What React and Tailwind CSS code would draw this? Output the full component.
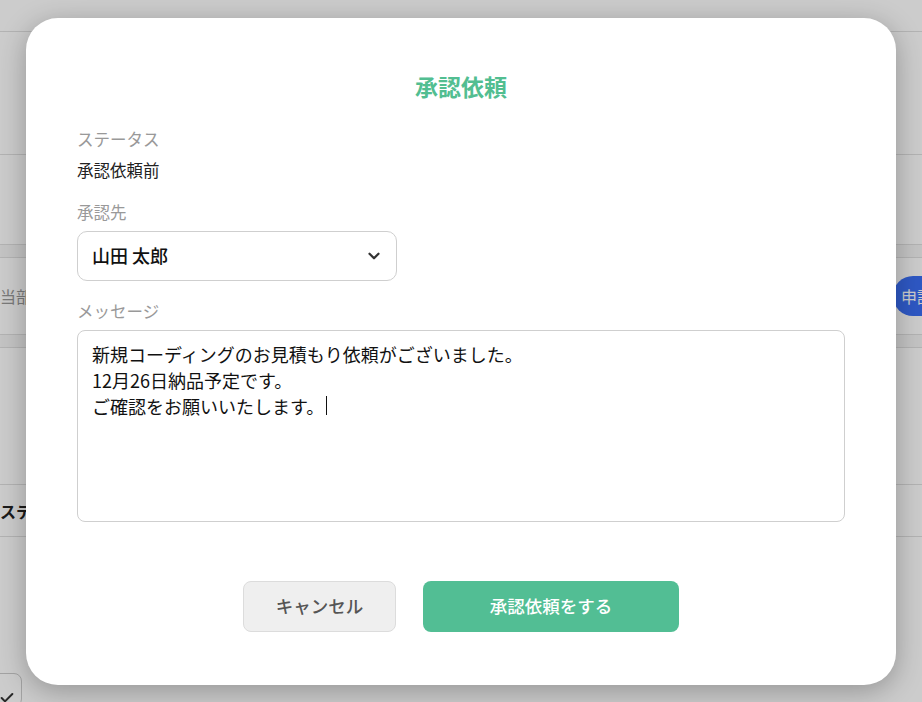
import { ChevronDown, Check } from "lucide-react";

function BackgroundPage() {
  return (
    <div className="flex flex-col bg-white text-[16px] text-[#555]">
      <div className="h-[32px] border-b border-[#e0e0e0]" />
      <div className="h-[123px] border-b border-[#e0e0e0]" />
      <div className="h-[90px] border-b border-[#e0e0e0]" />
      <div className="h-[13px] border-b border-[#e0e0e0] bg-[#f6f6f6]" />
      <div className="h-[77px] border-b border-[#e0e0e0] flex items-center justify-between">
        <span className="text-[#999]">当部署</span>
        <span className="shrink-0 mr-[-51px] w-[80px] h-[40px] pl-2 flex items-center rounded-l-full bg-[#3a6ff5] text-white">
          申請
        </span>
      </div>
      <div className="h-[13px] border-b border-[#e0e0e0] bg-[#f6f6f6]" />
      <div className="h-[137px] border-b border-[#e0e0e0]" />
      <div className="h-[52px] border-b border-[#e0e0e0] flex items-center">
        <span className="font-semibold text-[#222]">ステータス</span>
      </div>
      <div className="h-[136px]" />
      <div className="-ml-3 w-[34px] h-[34px] rounded-lg border border-[#ccc] flex items-end justify-end pr-1.5">
        <Check size={16} strokeWidth={3} className="text-[#333]" />
      </div>
    </div>
  );
}

function ApprovalModal() {
  return (
    <div className="w-[870px] rounded-[32px] bg-white px-[51px] pt-[54px] pb-[53px] shadow-[0_6px_28px_rgba(0,0,0,0.28)]">
      <h2 className="text-center text-[23px] leading-[28px] font-semibold text-[#52be91]">承認依頼</h2>

      <div className="mt-[27px] text-[16.5px] leading-[24px] text-[#999]">ステータス</div>
      <div className="mt-[8px] text-[16.5px] leading-[22px] text-[#222]">承認依頼前</div>

      <div className="mt-[19px] text-[16.5px] leading-[24px] text-[#999]">承認先</div>
      <div className="mt-[7px] w-[320px] h-[50px] rounded-[10px] border border-[#cfcfcf] flex items-center justify-between pl-[14px] pr-[13px]">
        <span className="text-[18px] font-medium text-[#111]">山田 太郎</span>
        <ChevronDown size={18} strokeWidth={3} className="text-[#333]" />
      </div>

      <div className="mt-[18px] text-[16.5px] leading-[24px] text-[#999]">メッセージ</div>
      <div className="mt-[7px] h-[192px] rounded-[8px] border border-[#cfcfcf] px-[14px] pt-[10px] text-[18px] leading-[26px] text-[#111]">
        <div>新規コーディングのお見積もり依頼がございました。</div>
        <div>12月26日納品予定です。</div>
        <div className="flex items-center">
          ご確認をお願いいたします。
          <span className="ml-[2px] inline-block w-px h-[19px] bg-[#111]" />
        </div>
      </div>

      <div className="mt-[59px] flex justify-center gap-[27px]">
        <button className="w-[153px] h-[51px] rounded-[8px] border border-[#dcdcdc] bg-[#efefef] text-[17.5px] font-medium text-[#555]">
          キャンセル
        </button>
        <button className="w-[256px] h-[51px] rounded-[8px] bg-[#52be94] text-[17.5px] font-medium text-white">
          承認依頼をする
        </button>
      </div>
    </div>
  );
}

export default function App() {
  return (
    <div className="relative h-screen overflow-hidden font-['Noto_Sans_CJK_JP','Noto_Sans',sans-serif]">
      <BackgroundPage />
      <div className="absolute inset-0 bg-black/20 flex items-center justify-center">
        <ApprovalModal />
      </div>
    </div>
  );
}
